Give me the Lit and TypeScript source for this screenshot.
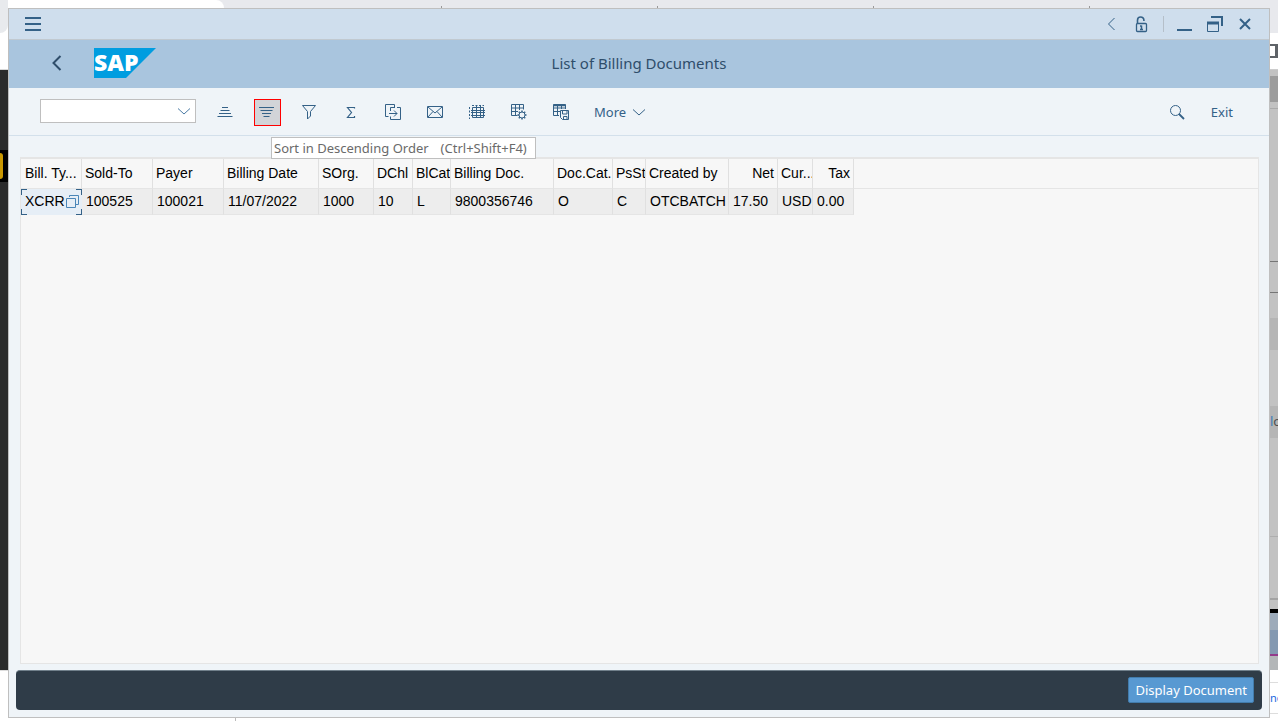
import { LitElement, html, css, svg } from "lit";
import { customElement, property } from "lit/decorators.js";

const icons: Record<string, unknown> = {
  menu: svg`<path d="M1 3h16M1 9h16M1 15h16" stroke-width="2"/>`,
  left: svg`<path d="M12.500 3 6.500 9l6 6"/>`,
  lock: svg`<rect x="4.500" y="8.500" width="10" height="8" rx="1" stroke-width="1.300"/><path d="M5.500 8V5.200a3.200 3.200 0 0 1 6.400 0V6" stroke-width="1.600"/><path d="M9.500 10.500v4M8 14.500h3M8 11h1.500" stroke-width="1.500"/>`,
  minimise: svg`<path d="M1 15h15" stroke-width="2"/>`,
  restore: svg`<path d="M5 2h11v9" stroke-width="2"/><path d="M1.500 7.500h11v9h-11z"/><path d="M1 8h12" stroke-width="3"/>`,
  close: svg`<path d="m4 4 10 10M14 4 4 14" stroke-width="2"/>`,
  asc: svg`<path d="M6 4.500h6M4.500 7.500h9M3 10.500h12M1.500 13.500h15"/>`,
  desc: svg`<path d="M1 4.500h15M2.500 7.500h12M4 10.500h9M5.500 13.500h6"/>`,
  filter: svg`<path d="M2.500 2.500h13l-5 6v4.500l-3 3V8.500z"/>`,
  sum: svg`<path d="M12.500 5.500V4.500H5.500l4 5-4 5h7v-1.500" stroke-width="1.200"/>`,
  export: svg`<path d="M4.500 13.500H1.500V1.500h9V4M13 4.500h3.500v12H6.500v-3M6.500 8V4.500H11M5 10.500h8M10 7.500l3 3-3 3"/>`,
  mail: svg`<path d="M1.500 3.500h15v11h-15zM2 4l7 6 7-6M2 14l5-5.500M16 14l-5-5.500"/>`,
  layout: svg`<path d="M4.500 4.500h11v10h-11zM3 7.500h14M3 9.500h14M3 12.500h14M8.500 2v13M12.500 2v13"/><path d="M1.500 4v12M4 2.500h12" stroke-dasharray="2 1.500"/>`,
  settings: svg`<path d="M7.500 12.500h-6v-11h12v5M1 5h13M1 8.500h7M5.500 1v12M9.500 1v6"/><circle cx="12" cy="12" r="3"/><path d="M12 7.500v1.500M12 15v1.500M7.500 12h1.500M15 12h1.500M8.800 8.800l1 1M14.200 14.200l1 1M8.800 15.200l1-1M14.200 9.800l1-1" stroke-width="1.500"/>`,
  save: svg`<path d="M7 12.500H1.500v-11h12V6M1 5h13M1 8.500h7M5.500 1v11M9.500 1v5"/><path d="M1 2.500h13" stroke-width="1.500"/><path d="M8.500 7.500h8v9h-6l-2-2zM10.500 8v3h4.500V8M11.500 16.500v-3H15v3"/>`,
  search: svg`<circle cx="7.500" cy="7.500" r="5"/><path d="m11 11 5 5" stroke-width="1.800"/>`,
  copy: svg`<path d="M4.500 5V3.500h9v9H11M1.500 6.500h9v9h-9z"/>`,
  down: svg`<path d="m3 6.500 6 5.500 6-5.500"/>`,
  back: svg`<path d="m12.500 2-7 7 7 7" stroke-width="2"/>`,
};

@customElement("ui-icon")
class UiIcon extends LitElement {
  static styles = css`
    :host { display: inline-flex; width: 18px; height: 18px; flex: none; pointer-events: none; }
    svg { width: 18px; height: 18px; fill: none; stroke: currentColor; overflow: visible; }
  `;
  @property() name = "";
  render() {
    return html`<svg viewBox="0 0 18 18" aria-hidden="true">${icons[this.name]}</svg>`;
  }
}

const columns = [
  { label: "Bill. Ty...", value: "XCRR", width: 61 },
  { label: "Sold-To", value: "100525", width: 71 },
  { label: "Payer", value: "100021", width: 71 },
  { label: "Billing Date", value: "11/07/2022", width: 95 },
  { label: "SOrg.", value: "1000", width: 55 },
  { label: "DChl", value: "10", width: 39 },
  { label: "BlCat", value: "L", width: 38 },
  { label: "Billing Doc.", value: "9800356746", width: 103 },
  { label: "Doc.Cat.", value: "O", width: 59 },
  { label: "PsSt", value: "C", width: 33 },
  { label: "Created by", value: "OTCBATCH", width: 83 },
  { label: "Net", value: "17.50", width: 49, end: true },
  { label: "Cur...", value: "USD", width: 35 },
  { label: "Tax", value: "0.00", width: 41, end: true },
];

@customElement("billing-table")
class BillingTable extends LitElement {
  static styles = css`
    :host { display: block; flex: 1; margin: 0 10px 0 11px; background: #f7f7f7; border: 1px solid #e5e5e5; border-top-width: 2px; overflow: hidden; }
    table { width: 100%; table-layout: fixed; border-collapse: separate; border-spacing: 0; font: 14px/16px "Liberation Sans", Arial, sans-serif; color: #000; }
    th, td { box-sizing: border-box; border-right: 1px solid #e0e0e0; border-bottom: 1px solid #e5e5e5; white-space: nowrap; overflow: hidden; text-align: left; font-weight: 400; }
    th { height: 30px; padding: 0 0 2px 3px; }
    th:first-child { padding-left: 4px; }
    th.end { text-align: right; padding: 0 3px 2px 0; }
    td { height: 26px; padding: 0 0 2px 4px; background: #ededed; }
    th.rest { border-right: 0; }
    td.rest { border: 0; background: none; }
    td.focus { padding: 0 0 2px; border: 0; background:
      linear-gradient(#346187, #346187) 0 0 / 6px 1px, linear-gradient(#346187, #346187) 0 0 / 1px 6px,
      linear-gradient(#346187, #346187) 100% 0 / 6px 1px, linear-gradient(#346187, #346187) 100% 0 / 1px 6px,
      linear-gradient(#346187, #346187) 0 100% / 6px 1px, linear-gradient(#346187, #346187) 0 100% / 1px 6px,
      linear-gradient(#346187, #346187) 100% 100% / 6px 1px, linear-gradient(#346187, #346187) 100% 100% / 1px 6px, #e6eef6;
      background-repeat: no-repeat; }
    .cell { display: flex; align-items: center; height: 18px; padding-left: 4px; }
    .help { display: flex; border: 0; padding: 0; background: none; color: #4a86b8; }
  `;
  render() {
    return html`<table>
      <colgroup>${columns.map((c) => html`<col style="width:${c.width}px" />`)}<col /></colgroup>
      <thead><tr>${columns.map((c) => html`<th scope="col" class=${c.end ? "end" : ""}>${c.label}</th>`)}<th class="rest"></th></tr></thead>
      <tbody><tr>
        ${columns.map((c, i) => i === 0
          ? html`<td class="focus"><div class="cell">${c.value}<button class="help" aria-label="Value help"><ui-icon name="copy"></ui-icon></button></div></td>`
          : html`<td>${c.value}</td>`)}
        <td class="rest"></td>
      </tr></tbody>
    </table>`;
  }
}

const tools = [
  ["asc", "Sort ascending"], ["desc", "Sort descending"], ["filter", "Filter"],
  ["sum", "Total"], ["export", "Export"], ["mail", "Mail"],
  ["layout", "Choose layout"], ["settings", "Change layout"], ["save", "Save layout"],
];

@customElement("app-root")
class AppRoot extends LitElement {
  static styles = css`
    :host { display: grid; grid-template: 8px minmax(0, 1fr) 8px / 8px minmax(0, 1fr) 8px; height: 100vh; overflow: hidden; background: #fff; font: 13px/18px "Noto Sans", sans-serif; color: #346187; }
    button, select { font: inherit; color: inherit; border: 0; padding: 0; margin: 0; background: none; border-radius: 0; }
    .side { grid-row: 1 / -1; overflow: hidden; }
    .side-left { grid-column: 1; display: flex; flex-direction: column; background: linear-gradient(#fff 69px, #d8d8d8 69px 70px, #2b2b2b 70px 670px, #ddd 670px 671px, #fff 671px); }
    .tab-edge { height: 33px; background: #e8eaed; border-bottom-right-radius: 8px; }
    .marker { margin-top: 117px; padding: 3px 0; height: 26px; background: #000; }
    .marker-fill { width: 3px; height: 26px; background: #c99700; border-radius: 0 3px 3px 0; }
    .tabs { grid-area: 1 / 2; display: flex; background: #e8e9ed; overflow: hidden; }
    .tab { width: 215px; flex: none; border-right: 1px solid #e8e9ed; background: linear-gradient(#999, #999) 100% 100% / 1px 2px no-repeat; background-origin: border-box; }
    .tab:first-child { width: 216px; background: #fff; border: 0; border-top-right-radius: 8px; }
    .tab + .tab { border: 0; width: 216px; }
    .tab:nth-child(2) { width: 218px; }
    .under { grid-area: 3 / 2; }
    .tick { width: 1px; height: 3px; margin-left: 227px; background: #bbb; }
    .side-right { grid-column: 3; display: flex; flex-direction: column; justify-content: space-between; padding: 412px 0 19px; box-sizing: border-box; white-space: nowrap; background: linear-gradient(#fff, #fff) 0 46px / 5px 10px no-repeat, linear-gradient(
      #e8e9ed 33px, #fff 33px 44px, #5f6368 44px 58px, #fff 58px 69px, #ccc 69px 70px, #c2c2c2 70px 76px, #9c9c9c 76px 102px,
      #c2c2c2 102px 108px, #aaa 108px 109px, #c2c2c2 109px 261px, #757575 261px 262px, #c2c2c2 262px 292px, #757575 292px 293px,
      #c2c2c2 293px 318px, #b5b5b5 318px 350px, #c2c2c2 350px 406px, #b5b5b5 406px 438px, #c2c2c2 438px 536px, #aeaeae 536px 537px,
      #c2c2c2 537px 598px, #a3a3a3 598px 600px, #c2c2c2 600px 609px, #000 609px 613px, #9dabba 613px 630px, #8499b1 630px 654px,
      #933b8b 654px 656px, #b3b6b8 656px 670px, #fff 670px 682px, #ddd 682px 683px, #fff 683px 713px, #ddd 713px 714px, #fff 714px); }
    .frag { color: #4d4d4d; }
    .frag::first-letter { color: #3d7ab5; }
    .frag-blue { color: #1a66e0; font-size: 11px; }
    .window { grid-area: 2 / 2; display: flex; flex-direction: column; border: 1px solid #bfbfbf; background: #eff4f8; min-height: 0; }
    .bar { display: flex; align-items: center; justify-content: space-between; height: 30px; padding: 0 9px; background: #cfdeed; border-bottom: 1px solid #c1c9d0; }
    .slot { display: flex; justify-content: center; align-items: center; width: 30px; height: 30px; }
    .controls { display: flex; align-items: center; }
    .rule { width: 1px; height: 16px; margin: 0 6px 0 7px; background: #b5bfc9; }
    .header { display: grid; grid-template-columns: 1fr auto 1fr; align-items: center; height: 48px; box-sizing: border-box; padding-bottom: 2px; background: #a9c5de; color: #2f4e6b; }
    .brand { display: flex; align-items: center; padding-left: 39px; gap: 28px; }
    .back { display: flex; }
    .logo { width: 62px; height: 30px; overflow: visible; }
    .logo-text { font: 800 23px "Open Sans", sans-serif; fill: #fff; }
    h1 { margin: 0; font-size: 15px; line-height: 20px; font-weight: 400; }
    .toolbar { display: flex; align-items: center; height: 47px; padding: 0 36px 0 31px; border-bottom: 1px solid #d3e0eb; }
    .combo { display: grid; width: 156px; height: 24px; margin: 0 16px 1px 0; }
    .combo-box { grid-area: 1 / 1; appearance: none; background: #fff; border: 1px solid #bfbfbf; }
    .combo-icon { grid-area: 1 / 1; place-self: center end; margin-right: 3px; color: #4a7ba5; }
    .tools { display: flex; gap: 15px; padding-top: 2px; }
    .tool-item { position: relative; }
    .tool { display: flex; width: 27px; height: 27px; box-sizing: border-box; padding: 3px; border: 1px solid transparent; }
    .tool-hot { background: #d2d4d8; border-color: #f00; }
    .tip { position: absolute; top: 38px; left: 17px; z-index: 1; display: flex; gap: 12px; box-sizing: border-box; min-width: 265px; height: 22px; padding: 0 2px; border: 1px solid #bfbfbf; background: #fff; color: #6a6a6a; line-height: 20px; white-space: nowrap; }
    .more { display: flex; align-items: center; gap: 4px; margin-left: 19px; }
    .end { display: flex; align-items: center; gap: 25px; margin-left: auto; }
    .find { display: flex; }
    .body { display: flex; flex-direction: column; flex: 1; min-height: 0; padding-top: 21px; }
    .footer { display: flex; align-items: center; justify-content: flex-end; height: 40px; box-sizing: border-box; margin: 6px 7px 7px; padding: 0 8px 1px; background: #2f3c48; border-top: 1px solid #71808b; border-radius: 4px; }
    .action { height: 26px; padding: 0 6px; border: 1px solid #427cac; border-radius: 2px; background: #5899d2; color: #fff; }
  `;
  render() {
    return html`
      <div class="side side-left"><div class="tab-edge"></div><div class="marker"><div class="marker-fill"></div></div></div>
      <div class="tabs"><div class="tab"></div>${[1, 2, 3, 4].map(() => html`<div class="tab"></div>`)}</div>
      <main class="window">
        <div class="bar">
          <button class="slot" aria-label="Menu"><ui-icon name="menu"></ui-icon></button>
          <div class="controls">
            <button class="slot" aria-label="Collapse"><ui-icon name="left"></ui-icon></button>
            <button class="slot" aria-label="Unlock"><ui-icon name="lock"></ui-icon></button>
            <span class="rule"></span>
            <button class="slot" aria-label="Minimise"><ui-icon name="minimise"></ui-icon></button>
            <button class="slot" aria-label="Restore"><ui-icon name="restore"></ui-icon></button>
            <button class="slot" aria-label="Close"><ui-icon name="close"></ui-icon></button>
          </div>
        </div>
        <header class="header">
          <div class="brand">
            <button class="back" aria-label="Back"><ui-icon name="back"></ui-icon></button>
            <svg class="logo" viewBox="0 0 62 30" role="img" aria-label="SAP">
              <path d="M0 0h62L32 30H0z" fill="#009de0" /><text class="logo-text" x="0" y="23">SAP</text>
            </svg>
          </div>
          <h1>List of Billing Documents</h1>
        </header>
        <div class="toolbar">
          <div class="combo">
            <select class="combo-box" aria-label="Command"><option></option></select>
            <ui-icon class="combo-icon" name="down"></ui-icon>
          </div>
          <div class="tools">
            ${tools.map(([icon, label]) => html`<div class="tool-item">
              <button class="tool ${icon === "desc" ? "tool-hot" : ""}" aria-label=${label}><ui-icon name=${icon}></ui-icon></button>
              ${icon === "desc" ? html`<div class="tip" role="tooltip"><span>Sort in Descending Order</span><span>(Ctrl+Shift+F4)</span></div>` : ""}
            </div>`)}
          </div>
          <button class="more">More<ui-icon name="down"></ui-icon></button>
          <div class="end">
            <button class="find" aria-label="Search"><ui-icon name="search"></ui-icon></button>
            <button>Exit</button>
          </div>
        </div>
        <div class="body"><billing-table></billing-table></div>
        <footer class="footer"><button class="action">Display Document</button></footer>
      </main>
      <div class="under"><div class="tick"></div></div>
      <div class="side side-right"><span class="frag">lo</span><span class="frag-blue">no</span></div>
    `;
  }
}
